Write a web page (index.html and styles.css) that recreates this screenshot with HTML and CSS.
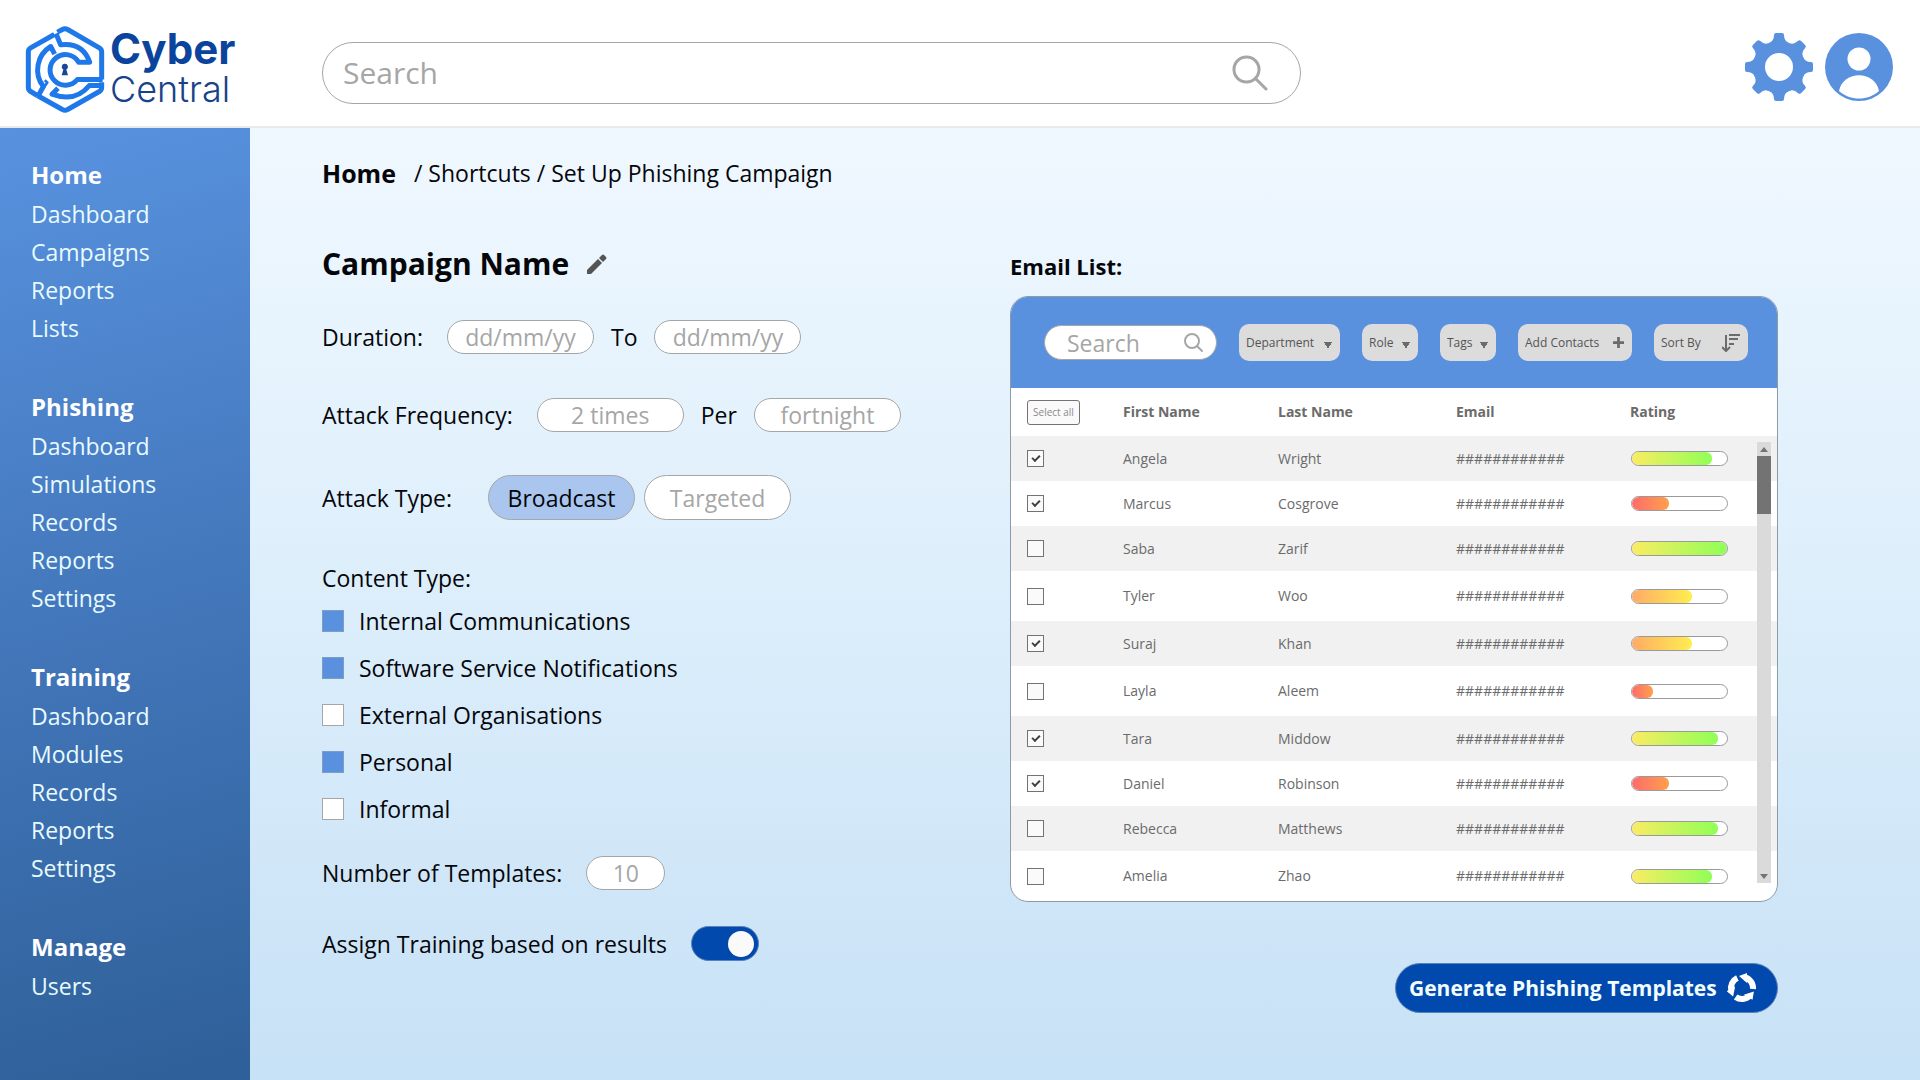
FILE: index.html
```html
<!DOCTYPE html>
<html lang="en">
<head>
<meta charset="utf-8">
<meta name="viewport" content="width=device-width, initial-scale=1">
<title>Cyber Central – Set Up Phishing Campaign</title>
<link rel="stylesheet" href="styles.css">
</head>
<body>
<header class="topbar">
  <a class="brand" href="#">
    <svg class="brand-mark" viewBox="75 75 240 266" fill="none" stroke="#1f78ea" stroke-width="15" stroke-linejoin="round" aria-hidden="true">
      <path d="M163 103 L92 143 Q85 147 85 155 V262 Q85 270 92 274 L112 286"/>
      <path d="M172 96 L187 88 Q195 84 203 88 L298 143 Q305 147 305 155 V238"/>
      <path d="M305 246 V262 Q305 270 298 274 L203 328 Q195 333 187 328 L112 286"/>
      <path d="M168 100 L182 134 Q248 126 269 186 H236 A46 46 0 1 0 232 238 H308" stroke-width="15"/>
      <path d="M164 162 L152 139 A82 82 0 0 0 130 259 L116 285" stroke-width="15"/>
      <path d="M112 290 L142 247 L134 240" stroke-width="8"/>
      <path d="M174 264 L156 282 Q226 308 268 256 H304" stroke-width="15"/>
      <path d="M194 191 a9 9 0 0 1 5 17 L204 225 H185 L190 208 A9 9 0 0 1 194 191Z" fill="#17489b" stroke="none"/>
    </svg>
    <span class="brand-text"><strong>Cyber</strong><span>Central</span></span>
  </a>
  <form class="search" role="search">
    <input type="search" placeholder="Search" aria-label="Search">
    <button type="button" aria-label="Run search">
      <svg viewBox="0 0 36 36" fill="none" stroke="#a6a6a6" stroke-width="3" stroke-linecap="round" aria-hidden="true"><circle cx="14.500" cy="14.500" r="12.500"/><path d="M24 24 L34 34"/></svg>
    </button>
  </form>
  <div class="account">
    <button type="button" aria-label="Settings">
      <svg viewBox="-34 -34 68 68" aria-hidden="true"><g fill="#5991de">
        <circle r="20" fill="none" stroke="#5991de" stroke-width="12"/>
        <path id="tooth" d="M-10 -24 Q-5 -26 -5 -32 Q-5 -34 -3 -34 H3 Q5 -34 5 -32 Q5 -26 10 -24Z"/>
        <use href="#tooth" transform="rotate(45)"/><use href="#tooth" transform="rotate(90)"/><use href="#tooth" transform="rotate(135)"/><use href="#tooth" transform="rotate(180)"/><use href="#tooth" transform="rotate(225)"/><use href="#tooth" transform="rotate(270)"/><use href="#tooth" transform="rotate(315)"/></g></svg>
    </button>
    <button type="button" aria-label="Profile">
      <svg viewBox="0 0 68 68" aria-hidden="true"><circle cx="34" cy="34" r="34" fill="#5991de"/><circle cx="34" cy="26" r="11.500" fill="#fff"/><path d="M14 58 C18 37 50 37 54 58 C43 68 25 68 14 58Z" fill="#fff"/></svg>
    </button>
  </div>
</header>
<div class="shell">
  <nav class="sidebar" aria-label="Main">
    <section><h2>Home</h2><a href="#">Dashboard</a><a href="#">Campaigns</a><a href="#">Reports</a><a href="#">Lists</a></section>
    <section><h2>Phishing</h2><a href="#">Dashboard</a><a href="#">Simulations</a><a href="#">Records</a><a href="#">Reports</a><a href="#">Settings</a></section>
    <section><h2>Training</h2><a href="#">Dashboard</a><a href="#">Modules</a><a href="#">Records</a><a href="#">Reports</a><a href="#">Settings</a></section>
    <section><h2>Manage</h2><a href="#">Users</a></section>
  </nav>
  <main class="content">
    <nav class="crumbs" aria-label="Breadcrumb"><a class="crumb-home" href="#">Home</a><span>/ <a href="#">Shortcuts</a> / <a href="#">Set Up Phishing Campaign</a></span></nav>
    <div class="columns">
      <form class="campaign">
        <div class="title-row">
          <h1>Campaign Name</h1>
          <button type="button" aria-label="Edit name"><svg viewBox="0 0 20 20" fill="#545454" aria-hidden="true"><path d="M0 16 L11 5 L15 9 L4 20 H0Z"/><path d="M12 4 L15 1 Q16 0 17 1 L19 3 Q20 4 19 5 L16 8Z"/></svg></button>
        </div>
        <div class="row dates">
          <label for="from">Duration:</label><input class="pill" id="from" type="text" placeholder="dd/mm/yy">
          <label for="to">To</label><input class="pill" id="to" type="text" placeholder="dd/mm/yy">
        </div>
        <div class="row frequency">
          <label for="times">Attack Frequency:</label><input class="pill" id="times" type="text" placeholder="2 times">
          <label for="per">Per</label><input class="pill" id="per" type="text" placeholder="fortnight">
        </div>
        <div class="row attack" role="group" aria-labelledby="attack-label">
          <span class="attack-label" id="attack-label">Attack Type:</span>
          <button class="choice chosen" type="button" aria-pressed="true">Broadcast</button>
          <button class="choice" type="button" aria-pressed="false">Targeted</button>
        </div>
        <div class="types" role="group" aria-labelledby="types-label">
          <span class="types-label" id="types-label">Content Type:</span>
          <label><input type="checkbox" checked>Internal Communications</label>
          <label><input type="checkbox" checked>Software Service Notifications</label>
          <label><input type="checkbox">External Organisations</label>
          <label><input type="checkbox" checked>Personal</label>
          <label><input type="checkbox">Informal</label>
        </div>
        <div class="row templates"><label for="count">Number of Templates:</label><input class="pill short" id="count" type="text" placeholder="10"></div>
        <div class="row assign"><label for="assign">Assign Training based on results</label><input class="switch" id="assign" type="checkbox" role="switch" checked></div>
      </form>
      <section class="emails">
        <h2>Email List:</h2>
        <div class="card">
          <div class="toolbar">
            <div class="mini-search"><input type="search" placeholder="Search" aria-label="Search contacts"><svg viewBox="0 0 20 20" fill="none" stroke="#a6a6a6" stroke-width="2" stroke-linecap="round" aria-hidden="true"><circle cx="8" cy="8" r="7"/><path d="M13 13 L18 18"/></svg></div>
            <select class="chip department" aria-label="Department"><option>Department</option></select>
            <select class="chip" aria-label="Role"><option>Role</option></select>
            <select class="chip" aria-label="Tags"><option>Tags</option></select>
            <button class="chip add" type="button">Add Contacts<svg viewBox="0 0 12 12" stroke="#6b6b6b" stroke-width="3" aria-hidden="true"><path d="M6 0 V12 M0 6 H12"/></svg></button>
            <button class="chip sort" type="button">Sort By<svg viewBox="0 0 18 18" fill="none" stroke="#6b6b6b" stroke-width="2" aria-hidden="true"><path d="M4 1 V16 M0 13 L4 17 L8 13 M7 1 H18 M7 5 H16 M7 10 H12"/></svg></button>
          </div>
          <div class="list">
            <table>
              <colgroup><col class="c-pick"><col class="c-first"><col class="c-last"><col class="c-email"><col></colgroup>
              <thead><tr><th><button class="select-all" type="button">Select all</button></th><th>First Name</th><th>Last Name</th><th>Email</th><th>Rating</th></tr></thead>
              <tbody>
                <tr><td><input type="checkbox" checked aria-label="Angela Wright"></td><td>Angela</td><td>Wright</td><td>############</td><td><div class="meter"><div class="high" style="width:84%"></div></div></td></tr>
                <tr><td><input type="checkbox" checked aria-label="Marcus Cosgrove"></td><td>Marcus</td><td>Cosgrove</td><td>############</td><td><div class="meter"><div class="low" style="width:39%"></div></div></td></tr>
                <tr><td><input type="checkbox" aria-label="Saba Zarif"></td><td>Saba</td><td>Zarif</td><td>############</td><td><div class="meter"><div class="high" style="width:100%"></div></div></td></tr>
                <tr class="tall"><td><input type="checkbox" aria-label="Tyler Woo"></td><td>Tyler</td><td>Woo</td><td>############</td><td><div class="meter"><div class="mid" style="width:63%"></div></div></td></tr>
                <tr><td><input type="checkbox" checked aria-label="Suraj Khan"></td><td>Suraj</td><td>Khan</td><td>############</td><td><div class="meter"><div class="mid" style="width:63%"></div></div></td></tr>
                <tr class="tall"><td><input type="checkbox" aria-label="Layla Aleem"></td><td>Layla</td><td>Aleem</td><td>############</td><td><div class="meter"><div class="low" style="width:22%"></div></div></td></tr>
                <tr><td><input type="checkbox" checked aria-label="Tara Middow"></td><td>Tara</td><td>Middow</td><td>############</td><td><div class="meter"><div class="high" style="width:90%"></div></div></td></tr>
                <tr><td><input type="checkbox" checked aria-label="Daniel Robinson"></td><td>Daniel</td><td>Robinson</td><td>############</td><td><div class="meter"><div class="low" style="width:39%"></div></div></td></tr>
                <tr><td><input type="checkbox" aria-label="Rebecca Matthews"></td><td>Rebecca</td><td>Matthews</td><td>############</td><td><div class="meter"><div class="high" style="width:90%"></div></div></td></tr>
                <tr class="tall"><td><input type="checkbox" aria-label="Amelia Zhao"></td><td>Amelia</td><td>Zhao</td><td>############</td><td><div class="meter"><div class="high" style="width:84%"></div></div></td></tr>
              </tbody>
            </table>
            <div class="scrollbar" aria-hidden="true"><span class="arrow up"></span><span class="thumb"></span><span class="arrow down"></span></div>
          </div>
        </div>
        <button class="generate" type="button">Generate Phishing Templates
          <svg viewBox="-15 -15 30 30" aria-hidden="true"><g fill="none" stroke="#fff" stroke-width="6"><path id="arc" d="M3 -10.600 A11 11 0 0 1 11 1"/><use href="#arc" transform="rotate(120)"/><use href="#arc" transform="rotate(240)"/></g><g fill="#fff"><path id="head" d="M-3 -12 L5 -15 L5 -5Z"/><use href="#head" transform="rotate(120)"/><use href="#head" transform="rotate(240)"/></g></svg>
        </button>
      </section>
    </div>
  </main>
</div>
</body>
</html>
```
FILE: styles.css
```css
*, *::before, *::after { box-sizing: border-box; }

body {
  display: flex;
  flex-direction: column;
  min-height: 100vh;
  margin: 0;
  font-family: "Open Sans", "Noto Sans", sans-serif;
  font-size: 23px;
  line-height: 32px;
  color: #05060a;
}

h1, h2 { margin: 0; font-weight: 700; }
a { color: inherit; text-decoration: none; }
button, input, select { margin: 0; font: inherit; color: inherit; }
button { padding: 0; border: 0; background: none; cursor: pointer; }
svg { display: block; }
input::placeholder { color: #a6a6a6; opacity: 1; }

/* Top bar */
.topbar {
  display: flex;
  align-items: flex-start;
  height: 128px;
  padding: 25px 27px 0 25px;
  background: #fff;
  border-bottom: 2px solid #e8eaed;
}
.brand { display: flex; gap: 5px; width: 297px; flex: none; }
.brand-mark { width: 80px; height: 89px; }
.brand-text {
  display: flex;
  flex-direction: column;
  font: 300 36px/34px Inter, sans-serif;
  color: #17438c;
}
.brand-text strong { font-size: 42px; line-height: 47px; font-weight: 700; color: #0b449c; }
.search {
  display: flex;
  align-items: center;
  flex: 0 1 979px;
  height: 62px;
  margin-top: 17px;
  padding: 0 32px 0 20px;
  border: 1px solid #a6a6a6;
  border-radius: 31px;
}
.search input { flex: 1; min-width: 0; padding: 0; border: 0; outline: 0; background: none; font-size: 30px; }
.search svg { width: 36px; height: 36px; }
.account { display: flex; gap: 12px; margin: 8px 0 0 auto; }
.account svg { width: 68px; height: 68px; }

/* Body */
.shell { display: grid; grid-template-columns: 250px 1fr; flex: 1; }
.sidebar {
  display: flex;
  flex-direction: column;
  gap: 40px;
  padding: 27px 31px;
  background: linear-gradient(165deg, #5892df, #4377bb 50%, #2e5f98);
  color: #e8faff;
}
.sidebar section { display: flex; flex-direction: column; }
.sidebar h2 { font-size: 24px; line-height: 40px; color: #fff; }
.sidebar a { line-height: 38px; }

.content {
  padding: 29px 142px 40px 72px;
  background: linear-gradient(#f0f8ff, #dceefb 50%, #c7e1f6);
}
.crumbs { display: flex; gap: 18px; margin-bottom: 55px; }
.crumb-home { font-size: 25px; font-weight: 700; }
.columns { display: grid; grid-template-columns: 690fr 766fr; }

/* Campaign form */
.title-row { display: flex; align-items: center; gap: 18px; height: 40px; margin-bottom: 36px; }
.title-row h1 { font-size: 30px; line-height: 40px; }
.title-row svg { width: 20px; height: 20px; }
.row { display: flex; align-items: center; gap: 17px; }
.row label:first-child { margin-right: 7px; }
.pill {
  width: 147px;
  height: 34px;
  padding: 0;
  border: 1px solid #a6a6a6;
  border-radius: 17px;
  background: #fff;
  text-align: center;
}
.short { width: 79px; }
.dates { margin-bottom: 44px; }
.frequency { margin-bottom: 43px; }
.attack { gap: 9px; margin-bottom: 42px; }
.attack-label { width: 157px; }
.choice { width: 147px; height: 45px; border: 1px solid #a6a6a6; border-radius: 23px; background: #fff; color: #a6a6a6; }
.chosen { background: #aac6ee; color: #05060a; }
.types { display: flex; flex-direction: column; align-items: flex-start; gap: 15px; margin-bottom: 31px; }
.types-label { margin-bottom: -4px; }
.types label { display: flex; align-items: center; gap: 15px; }
.types input { appearance: none; width: 22px; height: 22px; border: 1px solid #a6a6a6; background: #fff; }
.types input:checked { background: #5991de; border-color: #7f9cc4; }
.templates { margin-bottom: 36px; }
.switch {
  display: flex;
  justify-content: flex-end;
  align-items: center;
  appearance: none;
  width: 68px;
  height: 35px;
  padding: 0 4px;
  border: 1px solid #5b81ba;
  border-radius: 18px;
  background: #0249ad;
}
.switch::before { content: ""; width: 26px; height: 26px; border-radius: 50%; background: #fafafa; }

/* Email list */
.emails { display: flex; flex-direction: column; }
.emails h2 { margin-bottom: 8px; font-size: 22px; line-height: 44px; }
.card { overflow: hidden; border: 1px solid #8f9aa8; border-radius: 18px; background: #fff; font-size: 14px; line-height: 20px; color: #6b6b6b; }
.toolbar { display: flex; align-items: center; gap: 22px; height: 91px; padding: 0 29px 0 33px; background: #5991de; }
.mini-search { display: flex; align-items: center; width: 173px; height: 35px; padding: 0 12px 0 22px; border: 1px solid #a6a6a6; border-radius: 18px; background: #fff; }
.mini-search input { flex: 1; min-width: 0; padding: 0; border: 0; outline: 0; background: none; font-size: 23px; }
.mini-search svg { width: 20px; height: 20px; }
.chip {
  display: flex;
  align-items: center;
  justify-content: space-between;
  appearance: none;
  width: 56px;
  height: 37px;
  padding: 0 7px;
  border: 0;
  border-radius: 10px;
  background: #dcdcdc;
  font-size: 12px;
  color: #545454;
}
select.chip {
  background:
    linear-gradient(to bottom left, #6b6b6b 50%, transparent 50%) right 12px top 18px / 4px 7px no-repeat,
    linear-gradient(to bottom right, #6b6b6b 50%, transparent 50%) right 8px top 18px / 4px 7px no-repeat,
    #dcdcdc;
}
.department.chip { width: 101px; }
.add.chip { width: 114px; padding-right: 8px; }
.sort.chip { width: 94px; padding-right: 8px; }
.add svg { width: 11px; height: 11px; }
.sort svg { width: 18px; height: 18px; }

.list { position: relative; }
table { width: 100%; table-layout: fixed; border-collapse: collapse; }
.c-pick { width: 112px; }
.c-first { width: 155px; }
.c-last { width: 178px; }
.c-email { width: 174px; }
th, td { height: 45px; padding: 0; text-align: left; }
th { height: 48px; font-size: 14px; font-weight: 700; }
.tall td { height: 50px; }
th:first-child, td:first-child { padding-left: 16px; }
tbody tr:nth-child(odd) { background: #f1f1f1; }
.select-all { width: 53px; height: 25px; border: 1px solid #737373; border-radius: 3px; background: #fafafa; font-size: 10px; font-weight: 400; line-height: 20px; color: #8a8a8a; }
td input { display: grid; place-items: center; appearance: none; width: 17px; height: 17px; border: 1px solid #737373; background: #fafafa; }
td input:checked::before { content: ""; width: 8px; height: 5px; margin-bottom: 2px; border: solid #404040; border-width: 0 0 2px 2px; transform: rotate(-45deg); }
.meter { width: 97px; height: 15px; margin-left: 1px; overflow: hidden; border: 1px solid #9a9a9a; border-radius: 8px; background: #fff; }
.meter div { height: 100%; border-radius: 6px; }
.high { background: linear-gradient(90deg, #fbec62, #8fff57); }
.mid { background: linear-gradient(90deg, #ffab66, #ffee4f); }
.low { background: linear-gradient(90deg, #ff6b6b, #ffa04d); }

.scrollbar { position: absolute; top: 54px; right: 6px; bottom: 18px; display: flex; flex-direction: column; width: 14px; background: #dadada; }
.arrow { display: grid; place-items: center; height: 14px; }
.arrow::before { content: ""; border: solid transparent; border-width: 0 4px; }
.up::before { border-bottom: 5px solid #737373; }
.down::before { border-top: 5px solid #737373; }
.down { margin-top: auto; }
.thumb { height: 58px; background: #737373; }

.generate {
  display: flex;
  align-items: center;
  justify-content: space-between;
  align-self: flex-end;
  width: 383px;
  height: 50px;
  margin-top: 61px;
  padding: 0 20px 0 13px;
  border: 1px solid #5b81ba;
  border-radius: 25px;
  background: #0249ad;
  font-size: 21px;
  font-weight: 700;
  white-space: nowrap;
  color: #f2fdff;
}
.generate svg { width: 30px; height: 30px; }
```
